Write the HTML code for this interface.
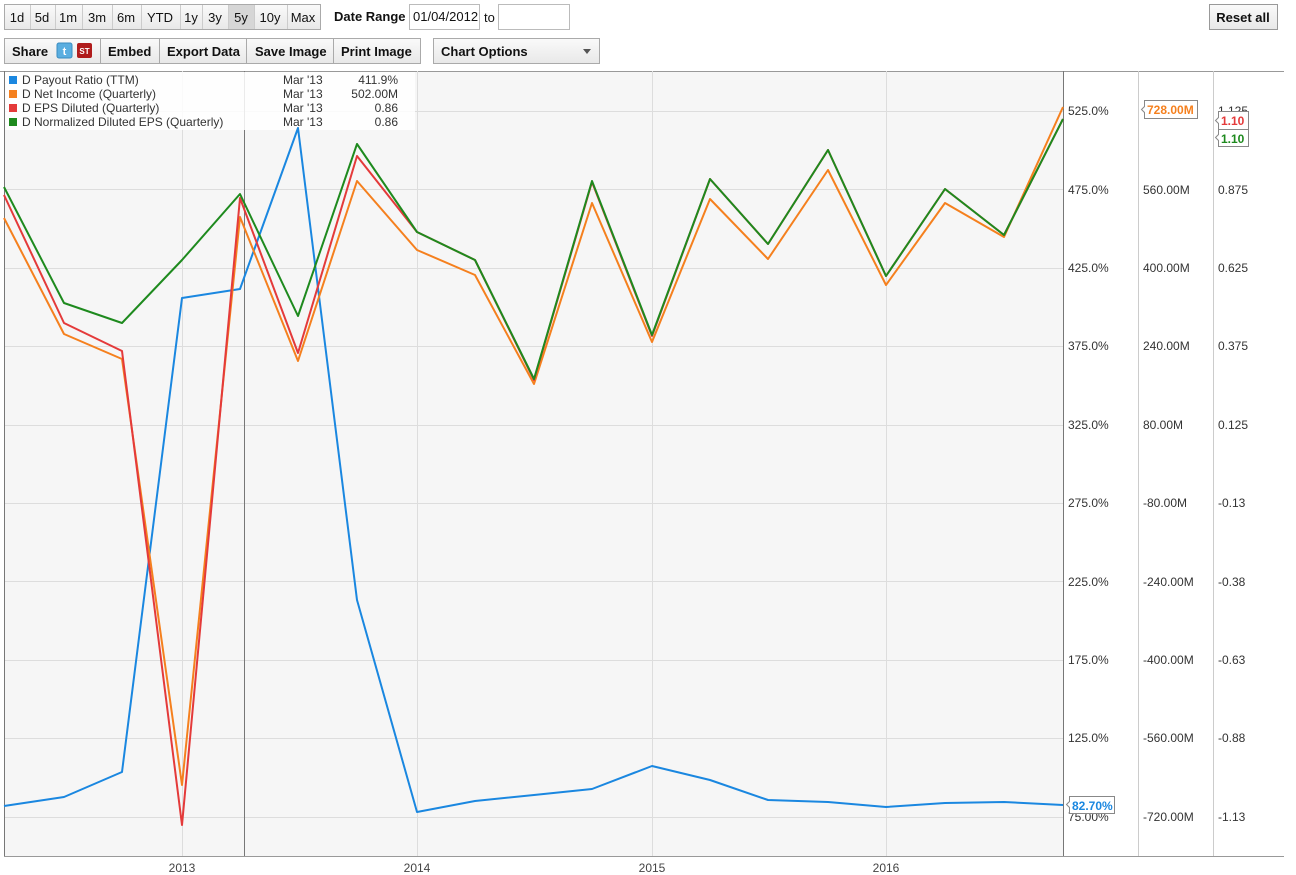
<!DOCTYPE html>
<html><head><meta charset="utf-8"><style>
body{margin:0;background:#fff;width:1296px;height:875px;overflow:hidden;font-family:"Liberation Sans",Arial,sans-serif}
svg{position:absolute;left:0;top:0}
</style></head><body>
<svg width="1296" height="875" font-family="Liberation Sans, Arial, sans-serif">
<defs><linearGradient id="g" x1="0" y1="0" x2="0" y2="1"><stop offset="0" stop-color="#fafafa"/><stop offset="1" stop-color="#e8e8e8"/></linearGradient></defs>
<!-- row 1 -->
<g stroke="#aaa" fill="url(#g)">
<rect x="4.5" y="4.5" width="316" height="25"/>
<rect x="228.5" y="4.5" width="26" height="25" fill="#d6d6d6"/>
</g>
<g stroke="#ccc"><path d="M30.5 5v24M55.5 5v24M82.5 5v24M112.5 5v24M141.5 5v24M180.5 5v24M202.5 5v24M228.5 5v24M254.5 5v24M287.5 5v24"/></g>
<g font-size="13" fill="#111" text-anchor="middle">
<text x="17" y="22">1d</text><text x="42" y="22">5d</text><text x="68" y="22">1m</text><text x="97" y="22">3m</text><text x="126" y="22">6m</text><text x="160" y="22">YTD</text><text x="191" y="22">1y</text><text x="215" y="22">3y</text><text x="241" y="22">5y</text><text x="270" y="22">10y</text><text x="303" y="22">Max</text>
</g>
<text x="334" y="21" font-size="13" font-weight="bold" fill="#111">Date Range</text>
<rect x="409.5" y="4.5" width="70" height="25" fill="#fff" stroke="#bbb"/>
<text x="413" y="21" font-size="13" fill="#111">01/04/2012</text>
<text x="484" y="22" font-size="13" fill="#111">to</text>
<rect x="498.5" y="4.5" width="71" height="25" fill="#fff" stroke="#bbb"/>
<rect x="1209.5" y="4.5" width="68" height="25" fill="url(#g)" stroke="#999"/>
<text x="1243" y="22" font-size="13" font-weight="bold" fill="#111" text-anchor="middle">Reset all</text>
<!-- row 2 -->
<rect x="4.5" y="38.5" width="416" height="25" fill="url(#g)" stroke="#aaa"/>
<path d="M100.5 39v24M159.5 39v24M246.5 39v24M333.5 39v24" stroke="#aaa"/>
<g font-size="13" font-weight="bold" fill="#111">
<text x="12" y="56">Share</text><text x="108" y="56">Embed</text><text x="167" y="56">Export Data</text><text x="255" y="56">Save Image</text><text x="341" y="56">Print Image</text>
</g>
<rect x="57" y="43" width="15" height="15" rx="2" fill="#5aaee0" stroke="#3a8cc0"/><text x="64.5" y="55" font-size="11" font-weight="bold" fill="#fff" text-anchor="middle">t</text>
<rect x="77" y="43" width="15" height="15" rx="2" fill="#b01c1c"/><text x="84.5" y="54" font-size="8" font-weight="bold" fill="#fff" text-anchor="middle">ST</text>
<rect x="433.5" y="38.5" width="166" height="25" fill="url(#g)" stroke="#aaa"/>
<text x="441" y="56" font-size="13" font-weight="bold" fill="#111">Chart Options</text>
<path d="M583 49h8l-4 5z" fill="#555"/>
<!-- chart -->
<rect x="4" y="71" width="1059" height="785" fill="#f6f6f6"/>
<path d="M0 71.5H1284" stroke="#999"/>
<g stroke="#ddd"><path d="M4 111.5H1063M4 189.5H1063M4 268.5H1063M4 346.5H1063M4 425.5H1063M4 503.5H1063M4 581.5H1063M4 660.5H1063M4 738.5H1063M4 817.5H1063M182.5 71V856M417.5 71V856M652.5 71V856M886.5 71V856"/></g>
<path d="M4.5 71V856M244.5 71V856M1063.5 71V856" stroke="#777"/>
<path d="M1138.5 71V856M1213.5 71V856" stroke="#ccc"/>
<path d="M4 856.5H1284" stroke="#999"/>
<rect x="5" y="72" width="410" height="58" fill="#fff" opacity="0.85"/>
<g font-size="12" fill="#444" text-anchor="middle"><text x="182" y="872">2013</text><text x="417" y="872">2014</text><text x="652" y="872">2015</text><text x="886" y="872">2016</text></g>
<g fill="none" stroke-width="2" stroke-linejoin="round">
<polyline stroke="#1a87e0" points="4,806 64,797 122,772 182,298 240,289 298,128 357,600 417,812 475,801 534,795 592,789 652,766 710,780 768,800 828,802 886,807 945,803 1004,802 1063,805"/>
<polyline stroke="#f5801e" points="4,218 64,334 122,359 182,785 240,217 298,361 357,181 417,250 475,275 534,384 592,203 652,342 710,199 768,259 828,170 886,285 945,203 1004,237 1063,107"/>
<polyline stroke="#e43a3a" points="4,195 64,323 122,351 182,825 240,198 298,353 357,156 417,232 475,260 534,380 592,182 652,336 710,179 768,244 828,150 886,276 945,189 1004,235 1063,119"/>
<polyline stroke="#1e8a1e" points="4,187 64,303 122,323 182,260 240,194 298,316 357,144 417,232 475,260 534,379 592,181 652,335 710,179 768,244 828,150 886,276 945,189 1004,235 1063,119"/>
</g>
<g font-size="12" fill="#333">
<rect x="9" y="76" width="8" height="8" fill="#1a87e0"/><text x="22" y="84">D Payout Ratio (TTM)</text>
<rect x="9" y="90" width="8" height="8" fill="#f5801e"/><text x="22" y="98">D Net Income (Quarterly)</text>
<rect x="9" y="104" width="8" height="8" fill="#e43a3a"/><text x="22" y="112">D EPS Diluted (Quarterly)</text>
<rect x="9" y="118" width="8" height="8" fill="#1e8a1e"/><text x="22" y="126">D Normalized Diluted EPS (Quarterly)</text>
<text x="283" y="84">Mar '13</text><text x="283" y="98">Mar '13</text><text x="283" y="112">Mar '13</text><text x="283" y="126">Mar '13</text>
<g text-anchor="end"><text x="398" y="84">411.9%</text><text x="398" y="98">502.00M</text><text x="398" y="112">0.86</text><text x="398" y="126">0.86</text></g>
</g>
<g font-size="12" fill="#333">
<text x="1068" y="115">525.0%</text><text x="1068" y="194">475.0%</text><text x="1068" y="272">425.0%</text><text x="1068" y="350">375.0%</text><text x="1068" y="429">325.0%</text><text x="1068" y="507">275.0%</text><text x="1068" y="586">225.0%</text><text x="1068" y="664">175.0%</text><text x="1068" y="742">125.0%</text><text x="1068" y="821">75.00%</text>
<text x="1143" y="194">560.00M</text><text x="1143" y="272">400.00M</text><text x="1143" y="350">240.00M</text><text x="1143" y="429">80.00M</text><text x="1143" y="507">-80.00M</text><text x="1143" y="586">-240.00M</text><text x="1143" y="664">-400.00M</text><text x="1143" y="742">-560.00M</text><text x="1143" y="821">-720.00M</text>
<text x="1218" y="115">1.125</text><text x="1218" y="194">0.875</text><text x="1218" y="272">0.625</text><text x="1218" y="350">0.375</text><text x="1218" y="429">0.125</text><text x="1218" y="507">-0.13</text><text x="1218" y="586">-0.38</text><text x="1218" y="664">-0.63</text><text x="1218" y="742">-0.88</text><text x="1218" y="821">-1.13</text>
</g>
<g stroke="#888" fill="#fff">
<path d="M1144.5 100.5h53v18h-53v-6l-3-3 3-3z"/>
<path d="M1218.5 111.5h30v18h-30v-6l-3-3 3-3z"/>
<path d="M1218.5 129.5h30v17h-30v-6l-3-3 3-3z"/>
<path d="M1069.5 796.5h45v17h-45v-6l-3-3 3-3z"/>
</g>
<g font-size="12" font-weight="bold">
<text x="1147" y="114" fill="#f5801e">728.00M</text>
<text x="1221" y="125" fill="#e43a3a">1.10</text>
<text x="1221" y="143" fill="#1e8a1e">1.10</text>
<text x="1072" y="810" fill="#1a87e0">82.70%</text>
</g>
</svg>
</body></html>
